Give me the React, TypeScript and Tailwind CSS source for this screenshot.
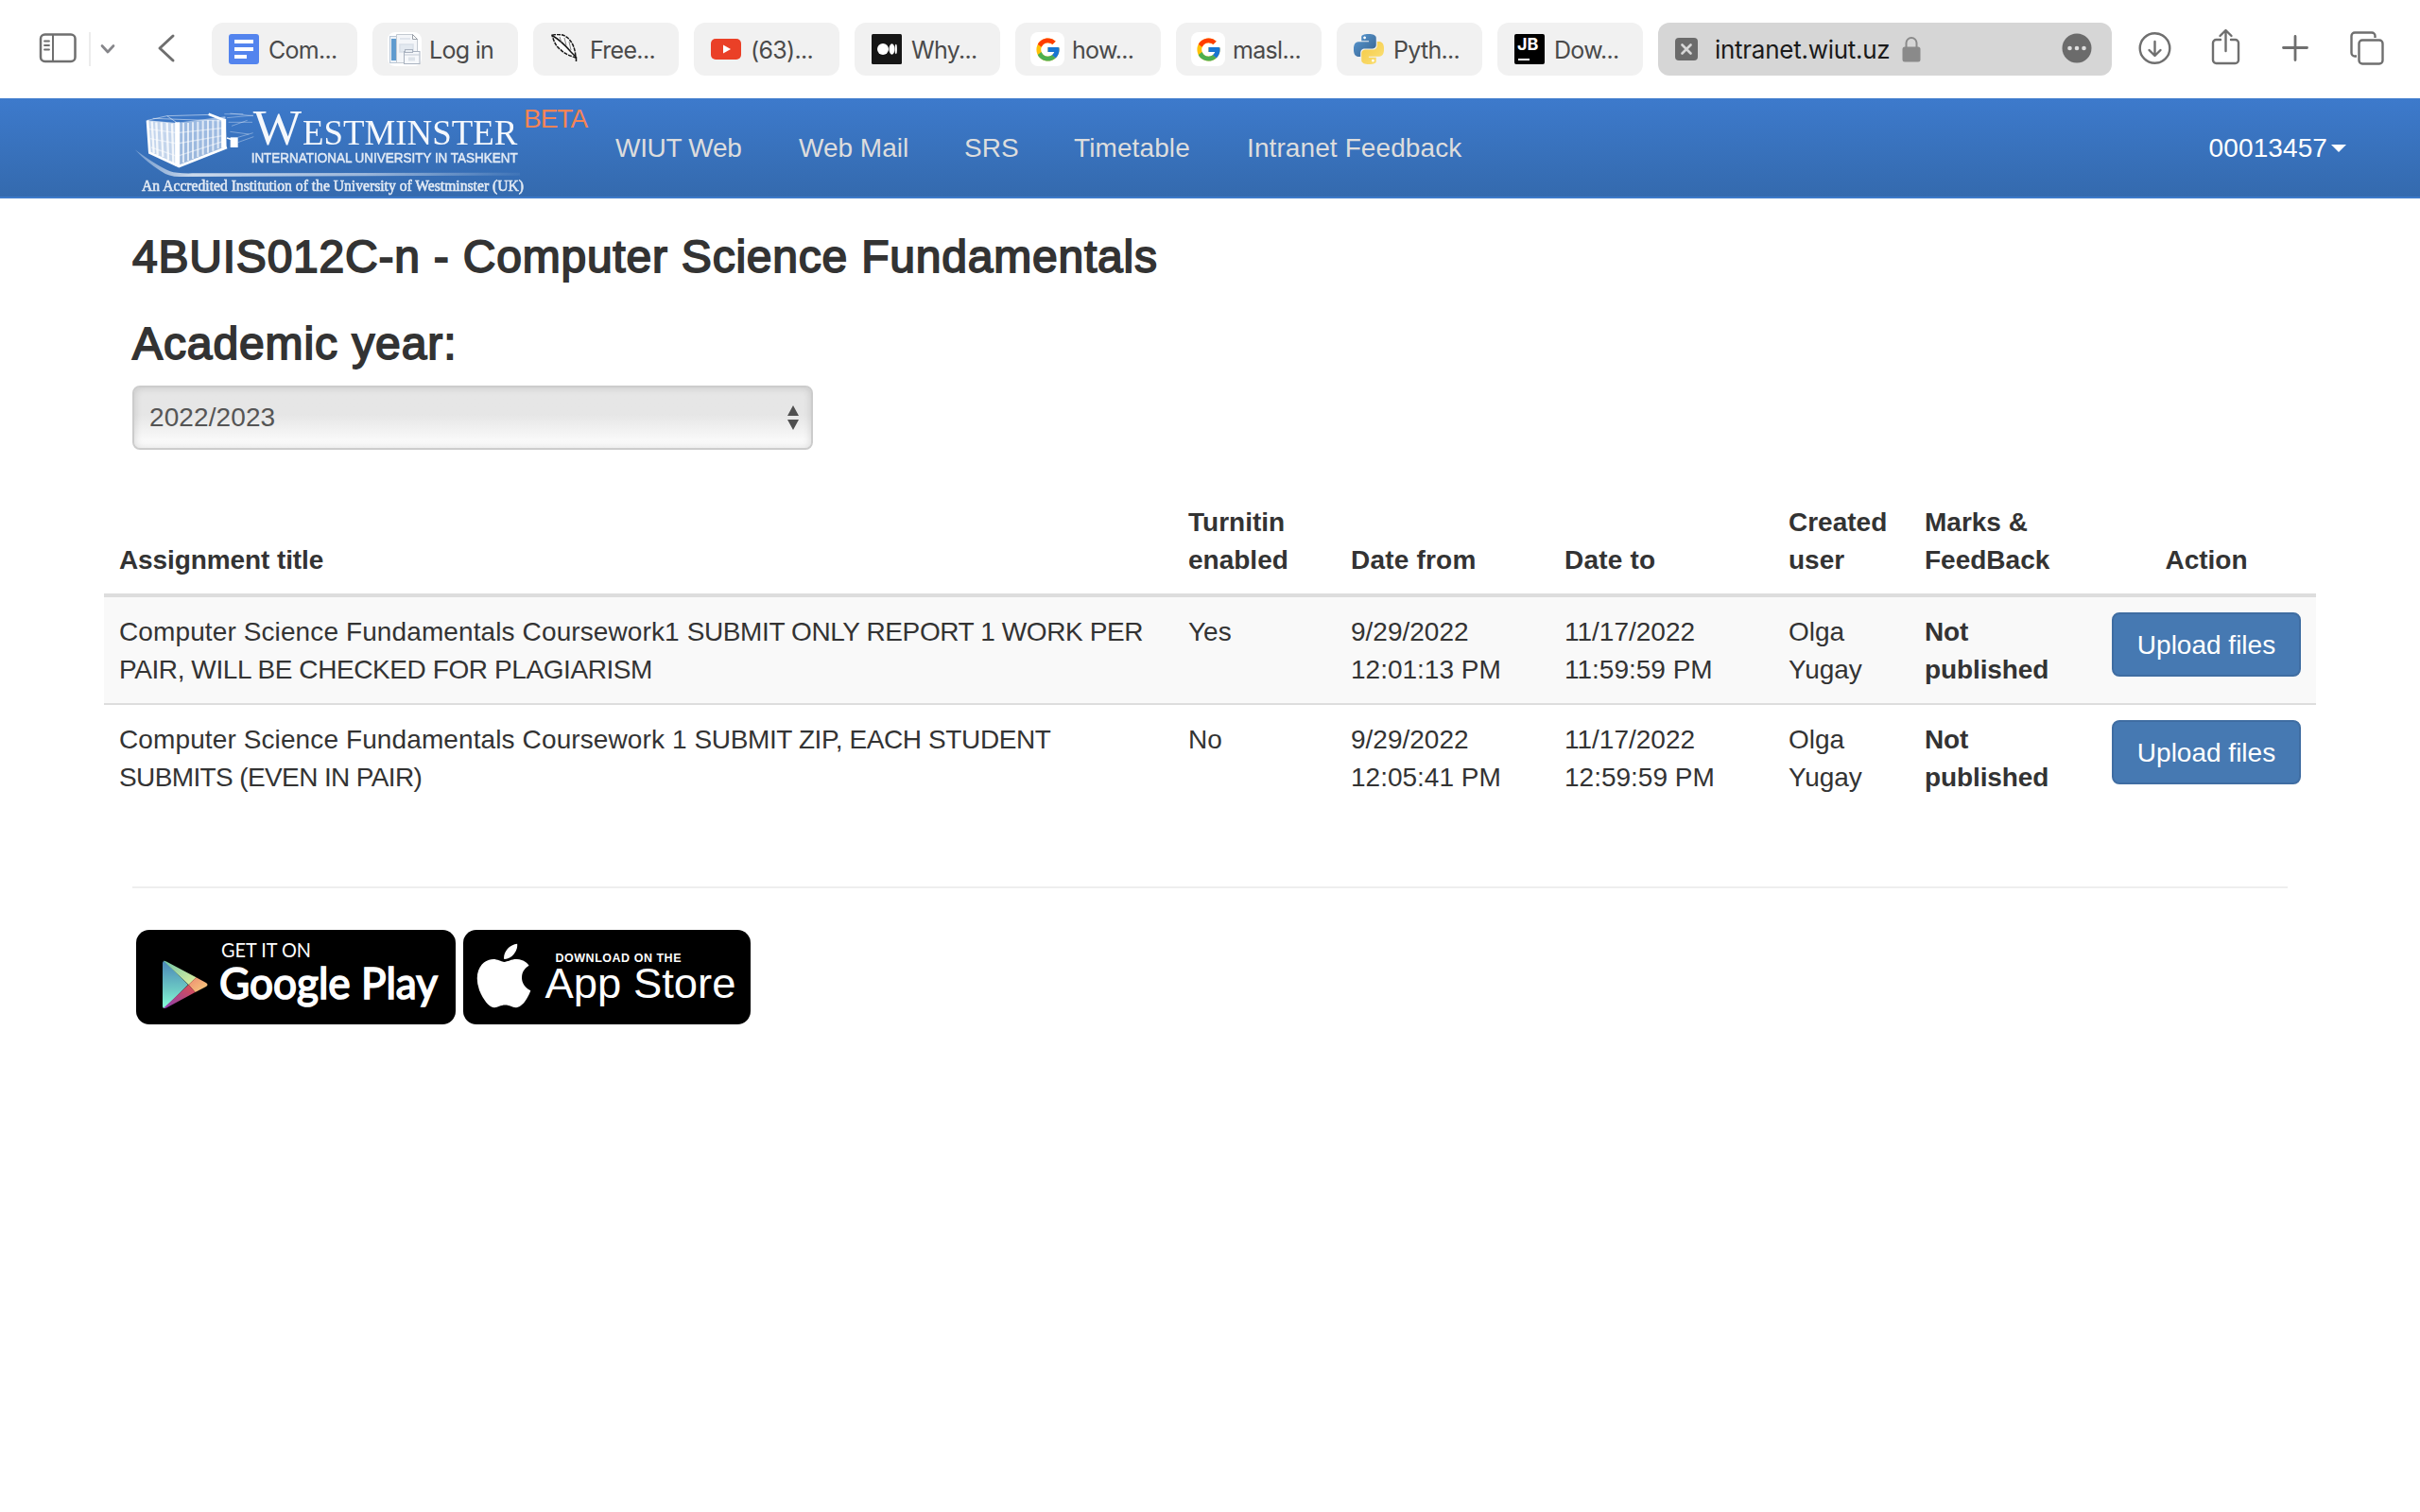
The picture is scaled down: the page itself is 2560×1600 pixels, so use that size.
import React from "react";
import { FcGoogle } from "react-icons/fc";
import { FaApple } from "react-icons/fa";

/* ---------- favicons ---------- */

const DocsIcon = () => (
  <svg width="32" height="32" viewBox="0 0 32 32">
    <rect width="32" height="32" rx="3" fill="#5384ee" />
    <path d="M6 6h20v4H6zM6 14h20v4H6zM6 22h13v4H6z" fill="#fff" />
  </svg>
);

const PortalIcon = () => (
  <svg width="36" height="36" viewBox="0 0 36 36">
    <rect width="36" height="36" rx="8" fill="#fff" />
    <rect x="2.500" y="4.500" width="10" height="28" fill="#eef3f8" stroke="#b9c7d6" />
    <rect x="4" y="7" width="5.500" height="23" fill="#5f9bcf" />
    <path d="M9.500 2.500h17l5 5v25h-22z" fill="#f4f6f9" stroke="#c3c9d1" />
    <path d="M26.500 2.500v5h5z" fill="#fff" stroke="#9aa0a8" />
    <path d="M13 7h11M13 13h14v8H13z" stroke="#d9dfe7" fill="#e3e9f0" strokeWidth="1.500" />
    <rect x="17.500" y="20.500" width="16.500" height="13" fill="#f6f8fb" stroke="#a9b2bf" />
    <rect x="18.500" y="18.500" width="8" height="3" fill="#e8ecf2" stroke="#a9b2bf" />
    <path d="M18 24h16" stroke="#c3cad4" />
    <rect x="22" y="26.500" width="7" height="4" fill="#dde3ea" />
  </svg>
);

const FeatherIcon = () => (
  <svg width="32" height="32" viewBox="0 0 32 32" fill="none" stroke="#151515">
    <path
      d="M2 1.200C8 0 14 0 18.500 4 24 9 26.500 16 27 25c-6-2-12-4-16-8.500C6 13 4 8 2 1.200z"
      fill="#fafafa"
      strokeWidth="1.500"
      strokeDasharray="4 1"
    />
    <path d="M2 1.500C10 6 17 13 22 19l5.500 5.500v4.500" strokeWidth="1.500" />
    <path d="M10 3l2 6M15 4l2 8M20 8l2 9" strokeWidth=".8" stroke="#666" />
  </svg>
);

const VideoIcon = () => (
  <svg width="32" height="32" viewBox="0 0 32 32">
    <rect y="5" width="32" height="22" rx="5" fill="#ea4027" />
    <path d="M13 11.500l8 4.500-8 4.500z" fill="#fff" />
  </svg>
);

const MediumIcon = () => (
  <svg width="32" height="32" viewBox="0 0 32 32">
    <rect width="32" height="32" rx="1.500" fill="#161616" />
    <circle cx="12" cy="16" r="6" fill="#fff" />
    <ellipse cx="21.500" cy="16" rx="3" ry="5.700" fill="#fff" />
    <ellipse cx="25.800" cy="16" rx="1.100" ry="5.200" fill="#fff" />
  </svg>
);

const GoogleIcon = () => (
  <span className="flex h-9 w-9 items-center justify-center rounded-lg bg-white">
    <FcGoogle size={29} />
  </span>
);

const PythonIcon = () => (
  <svg width="32" height="32" viewBox="0 0 24 24">
    <defs>
      <linearGradient id="pyBlue" x1="0" y1="0" x2="1" y2="1">
        <stop offset="0" stopColor="#5a9bd5" />
        <stop offset="1" stopColor="#36608c" />
      </linearGradient>
      <linearGradient id="pyYellow" x1="0" y1="0" x2="1" y2="1">
        <stop offset="0" stopColor="#f4c843" />
        <stop offset="1" stopColor="#fbe27a" />
      </linearGradient>
    </defs>
    <circle cx="9" cy="3" r="1.500" fill="#fff" />
    <circle cx="15.500" cy="21.200" r="1.500" fill="#fff" />
    <path
      fill="url(#pyBlue)"
      d="M14.25.18l.9.2.73.26.59.3.45.32.34.34.25.34.16.33.1.3.04.26.02.2-.01.13V8.5l-.05.63-.13.55-.21.46-.26.38-.3.31-.33.25-.35.19-.35.14-.33.1-.3.07-.26.04-.21.02H8.77l-.69.05-.59.14-.5.22-.41.27-.33.32-.27.35-.2.36-.15.37-.1.35-.07.32-.04.27-.02.21v3.06H3.17l-.21-.03-.28-.07-.32-.12-.35-.18-.36-.26-.36-.36-.35-.46-.32-.59-.28-.73-.21-.88-.14-1.05-.05-1.23.06-1.22.16-1.04.24-.87.32-.71.36-.57.4-.44.42-.33.42-.24.4-.16.36-.1.32-.05.24-.01h.16l.06.01h8.16v-.83H6.18l-.01-2.75-.02-.37.05-.34.11-.31.17-.28.25-.26.31-.23.38-.2.44-.18.51-.15.58-.12.64-.1.71-.06.77-.04.84-.02 1.27.05zm-6.3 1.98l-.23.33-.08.41.08.41.23.34.33.22.41.09.41-.09.33-.22.23-.34.08-.41-.08-.41-.23-.33-.33-.22-.41-.09-.41.09z"
    />
    <path
      fill="url(#pyYellow)"
      d="M21.04 6.11l.28.06.32.12.35.18.36.27.36.35.35.47.32.59.28.73.21.88.14 1.04.05 1.23-.06 1.23-.16 1.04-.24.86-.32.71-.36.57-.4.45-.42.33-.42.24-.4.16-.36.09-.32.05-.24.02-.16-.01h-8.22v.82h5.84l.01 2.76.02.36-.05.34-.11.31-.17.29-.25.25-.31.24-.38.2-.44.17-.51.15-.58.13-.64.09-.71.07-.77.04-.84.01-1.27-.04-1.07-.14-.9-.2-.73-.25-.59-.3-.45-.33-.34-.34-.25-.34-.16-.33-.1-.3-.04-.25-.02-.2.01-.13v-5.34l.05-.64.13-.54.21-.46.26-.38.3-.32.33-.24.35-.2.35-.14.33-.1.3-.06.26-.04.21-.02.13-.01h5.84l.69-.05.59-.14.5-.21.41-.28.33-.32.27-.35.2-.36.15-.36.1-.35.07-.32.04-.28.02-.21V6.07h2.09l.14.01zm-6.47 14.25l-.23.33-.08.41.08.41.23.33.33.23.41.08.41-.08.33-.23.23-.33.08-.41-.08-.41-.23-.33-.33-.23-.41-.08-.41.08z"
    />
  </svg>
);

const JetBrainsIcon = () => (
  <span className="flex h-8 w-8 flex-col rounded-[2px] bg-black pt-[2px] pl-[3px] font-['Inter'] text-[18px] leading-[17px] font-bold text-white">
    JB
    <span className="mt-[7px] ml-[1px] block h-[2px] w-3 bg-white" />
  </span>
);

/* ---------- browser toolbar ---------- */

const tabs = [
  { icon: <DocsIcon />, label: "Com..." },
  { icon: <PortalIcon />, label: "Log in" },
  { icon: <FeatherIcon />, label: "Free..." },
  { icon: <VideoIcon />, label: "(63)..." },
  { icon: <MediumIcon />, label: "Why..." },
  { icon: <GoogleIcon />, label: "how..." },
  { icon: <GoogleIcon />, label: "masl..." },
  { icon: <PythonIcon />, label: "Pyth..." },
  { icon: <JetBrainsIcon />, label: "Dow..." },
];

function Toolbar() {
  return (
    <div className="flex h-[104px] items-start bg-white pt-6 font-['Inter',sans-serif] text-[25px]">
      <div className="flex h-14 w-[224px] shrink-0 items-center">
        <svg className="-mt-[2px] ml-[41px]" width="40" height="32" viewBox="0 0 40 32" fill="none" stroke="#6f6f6f" strokeWidth="2.500">
          <rect x="2" y="1.500" width="36.500" height="28.500" rx="4.500" />
          <path d="M15 2v28" strokeWidth="2" />
          <path d="M6 8.500h5M6 13h5M6 17.500h5" strokeWidth="1.800" strokeLinecap="round" />
        </svg>
        <div className="ml-[13px] h-9 w-[2px] bg-[#ececec]" />
        <svg className="ml-[10px]" width="16" height="12" viewBox="0 0 16 12" fill="none" stroke="#86868a" strokeWidth="2.700" strokeLinecap="round" strokeLinejoin="round">
          <path d="M2 2.500l6 6.500 6-6.500" />
        </svg>
        <svg className="-mt-[2px] ml-[44px]" width="20" height="32" viewBox="0 0 20 32" fill="none" stroke="#6f6f6f" strokeWidth="3" strokeLinecap="round" strokeLinejoin="round">
          <path d="M17 3L3 16l14 13" />
        </svg>
      </div>
      <div className="flex shrink-0 gap-4">
        {tabs.map((t) => (
          <div key={t.label} className="flex h-14 w-[154px] items-center rounded-xl bg-[#f1f1f1] pl-4">
            <span className="flex w-9 shrink-0 justify-center">{t.icon}</span>
            <span className="mt-[1px] ml-2 tracking-[-0.7px] whitespace-nowrap text-[#4a4a4a]">{t.label}</span>
          </div>
        ))}
        <div className="flex h-14 w-[480px] items-center rounded-xl bg-[#d6d6d6] pl-[18px]">
          <svg width="24" height="24" viewBox="0 0 24 24">
            <rect width="24" height="24" rx="4" fill="#6b6b6b" />
            <path d="M7.500 7.500l9 9M16.500 7.500l-9 9" stroke="#d6d6d6" strokeWidth="2.600" strokeLinecap="round" />
          </svg>
          <span className="mt-[1px] ml-[18px] text-[26px] tracking-[-0.27px] text-[#1a1a1a]">intranet.wiut.uz</span>
          <svg className="ml-[13px]" width="20" height="28" viewBox="0 0 20 28">
            <path d="M4.500 12V7.500a5.500 5.500 0 0 1 11 0V12" fill="none" stroke="#8a8a8a" strokeWidth="2" />
            <rect x=".5" y="11.500" width="19" height="16" rx="2.500" fill="#8a8a8a" />
          </svg>
          <svg className="-mt-[2px] mr-[21px] ml-auto" width="32" height="32" viewBox="0 0 32 32">
            <circle cx="16" cy="16" r="15.500" fill="#6b6b6b" />
            <g fill="#dedede">
              <circle cx="8.500" cy="16" r="2.300" />
              <circle cx="16" cy="16" r="2.300" />
              <circle cx="23.500" cy="16" r="2.300" />
            </g>
          </svg>
        </div>
      </div>
      <svg className="mt-[7px] ml-[27px] shrink-0" width="36" height="40" viewBox="0 0 36 40" fill="none" stroke="#6f6f6f" strokeWidth="2.400" strokeLinecap="round" strokeLinejoin="round">
        <circle cx="18.500" cy="20" r="15.800" />
        <path d="M18.500 13v14.500M12.500 22l6 6 6-6" />
      </svg>
      <svg className="mt-[5px] ml-[41px] shrink-0" width="34" height="42" viewBox="0 0 34 42" fill="none" stroke="#6f6f6f" strokeWidth="2.400" strokeLinecap="round" strokeLinejoin="round">
        <path d="M11 14H6.500A3.500 3.500 0 0 0 3 17.500v18A3.500 3.500 0 0 0 6.500 39h20a3.500 3.500 0 0 0 3.500-3.500v-18a3.500 3.500 0 0 0-3.500-3.500H22" transform="translate(0 -1)" />
        <path d="M16.500 25V3.500M10.500 9l6-6 6 6" />
      </svg>
      <svg className="mt-[12px] ml-[41px] shrink-0" width="30" height="30" viewBox="0 0 30 30" fill="none" stroke="#6f6f6f" strokeWidth="2.800" strokeLinecap="round">
        <path d="M15 2.500v25M2.500 14.500h25" />
      </svg>
      <svg className="mt-[8px] ml-[42px] shrink-0" width="38" height="38" viewBox="0 0 38 38" fill="none" stroke="#6f6f6f" strokeWidth="2.400">
        <path d="M8 27.500H6A3.500 3.500 0 0 1 2.500 24V6A3.500 3.500 0 0 1 6 2.500h18A3.500 3.500 0 0 1 27.500 6v2" />
        <rect x="10.500" y="10.500" width="25" height="25" rx="3.500" />
      </svg>
    </div>
  );
}

/* ---------- site header ---------- */

const UniversityLogo = () => (
  <svg width="415" height="104" viewBox="30 42 1245 312" fill="#fff" className="shrink-0 overflow-visible blur-[0.5px]">
    <defs>
      <linearGradient id="swoosh" x1="0" y1="0" x2="1" y2="0">
        <stop offset="0" stopColor="#fff" stopOpacity=".3" />
        <stop offset=".15" stopColor="#fff" stopOpacity=".75" />
        <stop offset=".6" stopColor="#fff" stopOpacity=".5" />
        <stop offset="1" stopColor="#fff" stopOpacity=".05" />
      </linearGradient>
    </defs>
    {/* building */}
    <path d="M78 112L168 120 178 258 85 215z" opacity=".7" />
    <path d="M168 120L325 100 330 195 178 258z" opacity=".5" />
    <g stroke="#fff" fill="none">
      <path d="M78 112l7 103 93 43 152-60" strokeWidth="8" />
      <path d="M92 116l6 100M106 118l4 104M122 118l5 110M140 120l4 118M156 122l4 125" strokeWidth="7" opacity=".8" />
      <path d="M173 118v138" strokeWidth="15" />
      <path d="M192 120v126M207 120v120M222 118v116M238 116v112M254 113v108M270 112v103M286 112v97M302 110v92" strokeWidth="6" opacity=".7" />
      <path d="M84 140l88 12 148-16M86 170l86 16 148-26M90 198l82 28 148-48" strokeWidth="4" opacity=".5" />
      <path d="M78 112l62-14 32 22M140 98l140-4M95 106l225 8" strokeWidth="3" opacity=".5" />
      <path d="M272 92l50 20" strokeWidth="8" />
      <path d="M320 108v92" strokeWidth="15" />
      <path d="M322 92h60M330 104l84-8M335 118h76M345 130l50-18M340 148l60 8M365 166l48-14M365 182l50-18M340 90l74 8" strokeWidth="3" opacity=".35" />
      <path d="M330 168l20 6" strokeWidth="4" />
    </g>
    <path d="M341 166h24v32h-24z" />
    <path d="M38 205Q110 258 150 274q20 7 70 6l1040-2v9l-1080 4q-35 0-60-18Q75 245 38 205z" fill="url(#swoosh)" />
    <g opacity=".95" fontFamily="'Liberation Serif', serif">
      <text x="413" y="189" fontSize="158" textLength="154" lengthAdjust="spacingAndGlyphs">W</text>
      <text x="570" y="189" fontSize="113" textLength="682" lengthAdjust="spacingAndGlyphs">ESTMINSTER</text>
    </g>
    <text x="407" y="247" fontSize="43" textLength="846" lengthAdjust="spacingAndGlyphs" opacity=".85" stroke="#fff" strokeWidth="1.500" fontFamily="'Liberation Sans', sans-serif">
      INTERNATIONAL UNIVERSITY IN TASHKENT
    </text>
    <text x="60" y="335" fontSize="50" textLength="1212" lengthAdjust="spacingAndGlyphs" opacity=".85" stroke="#fff" strokeWidth="1.800" fontFamily="'Liberation Serif', serif">
      An Accredited Institution of the University of Westminster (UK)
    </text>
  </svg>
);

function Navbar() {
  return (
    <nav className="flex h-[106px] items-start border-b-2 border-[#3d7aca] bg-gradient-to-b from-[#3d7acc] to-[#346aae] pl-[140px] text-[28px] leading-10 text-[#dddddd]">
      <UniversityLogo />
      <span className="mt-[2px] ml-[-1px] w-[97px] shrink-0 tracking-[-1px] text-[#f58455]">BETA</span>
      <div className="mt-[33px] flex whitespace-nowrap">
        <a className="w-[194px] tracking-[-0.3px]">WIUT Web</a>
        <a className="w-[175px]">Web Mail</a>
        <a className="w-[116px]">SRS</a>
        <a className="w-[183px] tracking-[0.1px]">Timetable</a>
        <a className="tracking-[0.1px]">Intranet Feedback</a>
      </div>
      <div className="mt-[33px] mr-[78px] ml-auto flex items-center gap-1 text-white">
        <span className="tracking-[0.1px]">00013457</span>
        <svg width="16" height="8" viewBox="0 0 16 8">
          <path d="M0 0h16L8 8z" fill="#fff" />
        </svg>
      </div>
    </nav>
  );
}

/* ---------- assignments ---------- */

const rows = [
  {
    title: (
      <>
        <span className="tracking-[0.11px]">Computer Science Fundamentals Coursework1 </span>
        <span className="tracking-[-0.39px]">SUBMIT ONLY REPORT 1 WORK PER</span>
        <br />
        <span className="tracking-[-0.41px]">PAIR, WILL BE CHECKED FOR PLAGIARISM</span>
      </>
    ),
    turnitin: "Yes",
    from: ["9/29/2022", "12:01:13 PM"],
    to: ["11/17/2022", "11:59:59 PM"],
  },
  {
    title: (
      <>
        <span className="tracking-[0.11px]">Computer Science Fundamentals Coursework 1 </span>
        <span className="tracking-[-0.39px]">SUBMIT ZIP, EACH STUDENT</span>
        <br />
        <span className="tracking-[-0.62px]">SUBMITS (EVEN IN PAIR)</span>
      </>
    ),
    turnitin: "No",
    from: ["9/29/2022", "12:05:41 PM"],
    to: ["11/17/2022", "12:59:59 PM"],
  },
];

const Lines = ({ of }: { of: string[] }) => (
  <>
    {of.map((line) => (
      <div key={line}>{line}</div>
    ))}
  </>
);

function Assignments() {
  return (
    <table className="mt-10 ml-[110px] w-[2340px] table-fixed border-separate border-spacing-0 text-left whitespace-nowrap">
      <colgroup>
        <col className="w-[1131px]" />
        <col className="w-[172px]" />
        <col className="w-[226px]" />
        <col className="w-[237px]" />
        <col className="w-[144px]" />
        <col className="w-[198px]" />
        <col className="w-[232px]" />
      </colgroup>
      <thead>
        <tr className="align-bottom [&>th]:border-b-4 [&>th]:border-[#dddddd] [&>th]:px-4 [&>th]:pt-[17px] [&>th]:pb-[15px]">
          <th className="tracking-[-0.1px]">Assignment title</th>
          <th><Lines of={["Turnitin", "enabled"]} /></th>
          <th className="tracking-[0.2px]">Date from</th>
          <th className="tracking-[0.2px]">Date to</th>
          <th><Lines of={["Created", "user"]} /></th>
          <th><Lines of={["Marks &", "FeedBack"]} /></th>
          <th className="text-center">Action</th>
        </tr>
      </thead>
      <tbody>
        {rows.map((r) => (
          <tr
            key={r.turnitin}
            className="align-top odd:bg-[#f9f9f9] [&+tr>td]:border-t-2 [&+tr>td]:border-[#dddddd] [&>td]:px-4 [&>td]:pt-[17px] [&>td]:pb-[15px]"
          >
            <td>{r.title}</td>
            <td>{r.turnitin}</td>
            <td><Lines of={r.from} /></td>
            <td><Lines of={r.to} /></td>
            <td><Lines of={["Olga", "Yugay"]} /></td>
            <td className="font-bold tracking-[-0.1px]"><Lines of={["Not", "published"]} /></td>
            <td>
              <button className="-mt-[1px] block h-[68px] w-[200px] rounded-lg border-2 border-[#3f6da2] bg-[#4679b2] pt-[1px] text-white">
                Upload files
              </button>
            </td>
          </tr>
        ))}
      </tbody>
    </table>
  );
}

/* ---------- store badges ---------- */

const GooglePlayBadge = () => (
  <svg width="338" height="100" viewBox="0 0 338 100">
    <defs>
      <linearGradient id="gpLeft" x1="0" y1="0" x2="0" y2="1">
        <stop offset="0" stopColor="#4a86b8" />
        <stop offset=".6" stopColor="#6cc9c4" />
        <stop offset="1" stopColor="#86ffd9" />
      </linearGradient>
      <linearGradient id="gpTop" x1="0" y1="0" x2="1" y2="1">
        <stop offset="0" stopColor="#6fc5a6" />
        <stop offset="1" stopColor="#e2f2a0" />
      </linearGradient>
      <linearGradient id="gpRight" x1="0" y1="0" x2="1" y2="1">
        <stop offset="0" stopColor="#ee8a72" />
        <stop offset="1" stopColor="#f7cf7c" />
      </linearGradient>
      <linearGradient id="gpBottom" x1="1" y1="0" x2="0" y2="1">
        <stop offset="0" stopColor="#de5050" />
        <stop offset="1" stopColor="#8a3fb0" />
      </linearGradient>
    </defs>
    <rect width="338" height="100" rx="14" fill="#000" />
    <path d="M28 35q0-2 2-2l25 25-25 25q-2 0-2-2z" fill="url(#gpLeft)" />
    <path d="M29 32.800q1-.5 3 .8L63.500 50.300 55.500 58z" fill="url(#gpTop)" />
    <path d="M63.500 50.300L74 56q3 2 0 4l-11.500 6-7-8z" fill="url(#gpRight)" />
    <path d="M55.500 58l7 8L32 82.500q-2 1-3 .3z" fill="url(#gpBottom)" />
    <text x="90" y="28.500" fontSize="20.500" fill="#fff" textLength="95" lengthAdjust="spacingAndGlyphs" fontFamily="Lato, sans-serif">GET IT ON</text>
    <text x="88" y="73" fontSize="45.500" fill="#fff" textLength="231" lengthAdjust="spacingAndGlyphs" fontFamily="Lato, sans-serif" stroke="#fff" strokeWidth="1.700">Google Play</text>
  </svg>
);

const AppStoreBadge = () => (
  <div className="relative h-[100px] w-[304px] rounded-[14px] bg-black">
    <FaApple className="absolute top-[10px] left-[13.5px] h-[77px] w-[58px] text-white" />
    <svg className="absolute inset-0" width="304" height="100" viewBox="0 0 304 100" fill="#fff" fontFamily="'Liberation Sans', sans-serif">
      <text x="97.500" y="33.700" fontSize="12.500" fontWeight="bold" textLength="133">DOWNLOAD ON THE</text>
      <text x="86.500" y="72" fontSize="43.500" textLength="202" lengthAdjust="spacingAndGlyphs">App Store</text>
    </svg>
  </div>
);

export default function App() {
  return (
    <div className="h-[1600px] w-[2560px] overflow-hidden bg-white font-['Liberation_Sans',Arial,sans-serif] text-[28px] leading-10 text-[#333333]">
      <Toolbar />
      <Navbar />
      <main>
        <div className="ml-[140px] text-[48px] leading-[52px] whitespace-nowrap [-webkit-text-stroke:1.8px_#333333]">
          <h1 className="pt-9 tracking-[0.78px]">4BUIS012C-n - Computer Science Fundamentals</h1>
          <h2 className="mt-10 mb-[18px] tracking-[0.9px]">Academic year:</h2>
        </div>
        <div className="ml-[140px] flex h-[68px] w-[720px] items-center justify-between rounded-lg border-2 border-[#cccccc] bg-gradient-to-b from-[#e6e6e6] from-45% to-white pr-3 pl-4 text-[#555555] shadow-[inset_0_0_8px_rgba(0,0,0,0.15)]">
          <span className="tracking-[0.1px]">2022/2023</span>
          <svg width="14" height="28" viewBox="0 0 14 28" fill="#505050">
            <path d="M7 1l6 11H1zM7 27L1 16h12z" />
          </svg>
        </div>
        <Assignments />
        <hr className="mt-[80px] mr-[140px] ml-[140px] border-t-2 border-[#eeeeee]" />
        <div className="mt-11 ml-36 flex gap-2">
          <GooglePlayBadge />
          <AppStoreBadge />
        </div>
      </main>
    </div>
  );
}
